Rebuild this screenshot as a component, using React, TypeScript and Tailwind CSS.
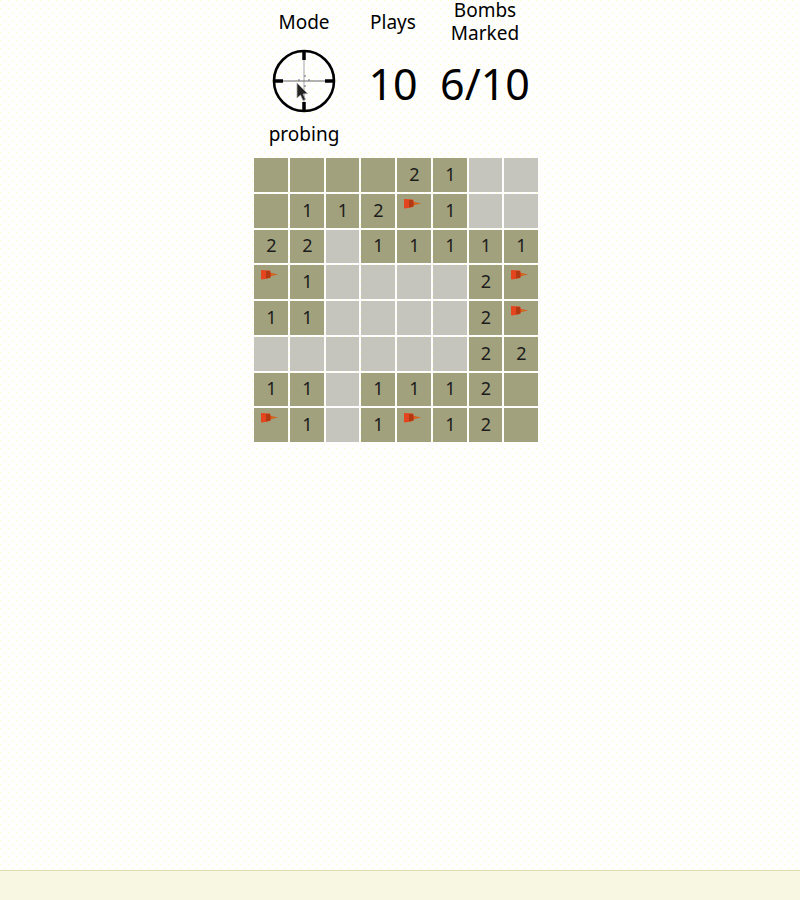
const LIGHT = 'L';
const FLAG = 'F';
const DARK = '';

const board = [
  [DARK, DARK, DARK, DARK, '2', '1', LIGHT, LIGHT],
  [DARK, '1', '1', '2', FLAG, '1', LIGHT, LIGHT],
  ['2', '2', LIGHT, '1', '1', '1', '1', '1'],
  [FLAG, '1', LIGHT, LIGHT, LIGHT, LIGHT, '2', FLAG],
  ['1', '1', LIGHT, LIGHT, LIGHT, LIGHT, '2', FLAG],
  [LIGHT, LIGHT, LIGHT, LIGHT, LIGHT, LIGHT, '2', '2'],
  ['1', '1', LIGHT, '1', '1', '1', '2', DARK],
  [FLAG, '1', LIGHT, '1', FLAG, '1', '2', DARK],
];

function Reticle() {
  return (
    <svg width="66" height="66" viewBox="0 0 66 66" className="block">
      <line x1="33" y1="3" x2="33" y2="63" stroke="#a5a5a5" strokeWidth="1" />
      <line x1="3" y1="33" x2="63" y2="33" stroke="#666" strokeWidth="1" />
      <path d="M33 3v9M33 54v9M3 33h9M54 33h9" stroke="#000" strokeWidth="3.5" />
      <path d="M28 33v-2M38 33v-2M33 28h2M33 38h2" stroke="#666" strokeWidth="1" />
      <circle cx="33" cy="33" r="30" fill="none" stroke="#000" strokeWidth="2.6" />
      <path d="M26 35 L26 50 L29.5 47 L32 52.5 L34.5 51.5 L32 46 L36.5 45.5 Z" fill="#222" stroke="#aaa" strokeWidth="0.8" />
    </svg>
  );
}

function Flag() {
  return (
    <svg width="17" height="10" viewBox="0 0 17 10" className="mt-[5px] ml-[7px] block">
      <path d="M0 0 L9 0.5 L10 3 L17 4.5 L10 6 L9 8 L1 9.5 L0 9 Z" fill="#e4441e" />
      <path d="M5 1 L9 1 L9.5 7.5 L5 8.5 Z" fill="#b03a12" />
      <path d="M10 3.5 L16 4.5 L10 5.5 Z" fill="#c8741a" />
    </svg>
  );
}

function Cell({ value }: { value: string }) {
  if (value === LIGHT) {
    return <div className="bg-[#c5c5bd]" />;
  }
  if (value === FLAG) {
    return (
      <div className="bg-[#a1a17d]">
        <Flag />
      </div>
    );
  }
  return (
    <div className="flex items-center justify-center bg-[#a1a17d] pb-[3px] pl-px text-[18px] leading-none text-[#1c1c1c]">
      {value}
    </div>
  );
}

export default function App() {
  return (
    <div className="flex min-h-[900px] flex-col bg-[#fefeff] bg-[radial-gradient(circle_at_0.5px_0.5px,#ffffb0_0.5px,transparent_0.5px),radial-gradient(circle_at_4.5px_4.5px,#ffffb0_0.5px,transparent_0.5px)] bg-[length:8px_8px] font-['Noto_Sans',sans-serif] text-black">
      <div className="flex flex-col items-center pr-2">
        <div className="grid w-[284px] grid-cols-[100px_78px_106px] text-center text-[19px] leading-[23px]">
          <div className="flex h-[46px] items-center justify-center pb-0.5">Mode</div>
          <div className="flex h-[46px] items-center justify-center pb-0.5">Plays</div>
          <div className="-mt-px h-[46px]">
            Bombs
            <br />
            Marked
          </div>
          <div className="flex h-[70px] items-center justify-center">
            <Reticle />
          </div>
          <div className="flex h-[70px] items-center justify-center pt-1 text-[43px]">10</div>
          <div className="flex h-[70px] items-center justify-center pt-1 text-[43px]">6/10</div>
          <div className="flex h-[42px] items-start justify-center pt-[7px]">probing</div>
        </div>
        <div className="grid h-[284px] w-[284px] grid-cols-[34px_34px_33px_34px_34px_34px_33px_34px] grid-rows-[34px_34px_33px_34px_34px_34px_33px_34px] gap-0.5">
          {board.flat().map((value, i) => (
            <Cell key={i} value={value} />
          ))}
        </div>
      </div>
      <div className="mt-auto h-[30px] border-t border-[#dcdcb4] bg-[#f8f8e2]" />
    </div>
  );
}
